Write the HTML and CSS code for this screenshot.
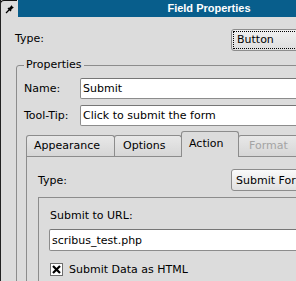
FILE: index.html
```html
<!DOCTYPE html>
<html lang="en">
<head>
    <meta charset="UTF-8">
    <meta name="viewport" content="width=device-width, initial-scale=1.0">
    <title>Field Properties</title>
    <link rel="stylesheet" href="styles.css">
</head>
<body>
    <div class="window">
        <div class="titlebar">
            <div class="corner">
                <svg width="10" height="10" viewBox="0 0 10 10">
                    <path d="M1 9 L4.5 5.5" stroke="#000" stroke-width="1.3"/>
                    <path d="M2.5 4.5 L5.5 7.5 L6.5 6.5 L6 6 L8 4 L9 4 L6 1 L6 2 L4 4 L3.5 3.5 Z" fill="#000"/>
                </svg>
            </div>
            <div class="title">Field Properties</div>
        </div>

        <div class="content">
            <div class="row type-row">
                <label class="type-label">Type:</label>
                <div class="combo"><span class="focus">Button</span></div>
            </div>

            <fieldset class="props">
                <legend>Properties</legend>
                <div class="row field">
                    <label for="name">Name:</label>
                    <input type="text" id="name" value="Submit">
                </div>
                <div class="row field">
                    <label for="tooltip">Tool-Tip:</label>
                    <input type="text" id="tooltip" value="Click to submit the form">
                </div>

                <div class="tabs">
                    <div class="tabbar">
                        <div class="tab tab-appearance">Appearance</div>
                        <div class="tab tab-options">Options</div>
                        <div class="tab tab-action active">Action</div>
                        <div class="tab tab-format disabled">Format</div>
                    </div>
                    <div class="pane">
                        <div class="row action-row">
                            <label class="action-label">Type:</label>
                            <button type="button">Submit Form</button>
                        </div>
                        <div class="box">
                            <div class="box-label">Submit to URL:</div>
                            <input type="text" class="url" value="scribus_test.php">
                            <div class="check">
                                <span class="checkbox">
                                    <svg width="9" height="9" viewBox="0 0 9 9">
                                        <path d="M1 1 L8 8 M8 1 L1 8" stroke="#000" stroke-width="2.2"/>
                                    </svg>
                                </span>
                                <span>Submit Data as HTML</span>
                            </div>
                        </div>
                    </div>
                </div>
            </fieldset>
        </div>
    </div>
</body>
</html>
```

FILE: styles.css
```css
html, body {
    margin: 0;
    padding: 0;
    overflow: hidden;
}
body {
    width: 296px;
    height: 281px;
    background-color: #dcdcdc;
    font-family: "DejaVu Sans", sans-serif;
    font-size: 11px;
    color: #000;
}
.window {
    width: 400px;
    height: 281px;
    border-left: 1px solid #222;
    box-sizing: border-box;
    overflow: hidden;
}
.titlebar {
    display: flex;
    height: 17px;
}
.corner {
    width: 17px;
    height: 17px;
    box-sizing: border-box;
    border-top: 1px solid #111;
    border-left: 1px solid #111;
    border-top-left-radius: 4px;
    margin-left: -1px;
    padding: 3px 0 0 4px;
}
.title {
    flex: 1;
    margin-left: 1px;
    background-color: #085e8c;
    color: #fff;
    font-family: "Liberation Sans", Arial, sans-serif;
    font-weight: bold;
    font-size: 11px;
    line-height: 17px;
    text-align: center;
}
.row {
    display: flex;
    align-items: center;
}
.type-row {
    height: 22px;
    margin-top: 12px;
    padding-left: 14px;
}
.type-label {
    width: 216px;
    margin-bottom: 3px;
}
.combo {
    width: 160px;
    height: 22px;
    box-sizing: border-box;
    border: 1px solid #8c8c8c;
    border-radius: 3px;
    background: linear-gradient(#f0f0f0, #dedede);
    padding: 1px;
}
.focus {
    display: block;
    height: 18px;
    line-height: 16px;
    box-sizing: border-box;
    border: 1px dotted #000;
    padding-left: 3px;
}
.props {
    margin: 7px 0 0 15px;
    padding: 0 0 0 7px;
    border: 1px solid #8c8c8c;
    border-radius: 3px;
    height: 260px;
}
.props legend {
    padding: 0 2px;
    line-height: 14px;
}
.field {
    height: 21px;
    margin-top: 6px;
}
.field label {
    width: 56px;
}
.field input {
    width: 280px;
}
input {
    height: 21px;
    box-sizing: border-box;
    margin: 0;
    padding: 0 2px;
    border: 1px solid #8c8c8c;
    border-top-color: #767676;
    border-radius: 2px;
    background: #fff;
    font-family: inherit;
    font-size: 11px;
    color: #000;
    outline: none;
}
.tabs {
    margin: 5px 0 0 2px;
}
.tabbar {
    display: flex;
    align-items: flex-end;
    height: 25px;
}
.tab {
    height: 21px;
    box-sizing: border-box;
    border: 1px solid #8c8c8c;
    border-bottom: none;
    border-radius: 3px 3px 0 0;
    margin-right: -1px;
    padding-left: 7px;
    line-height: 19px;
    background: linear-gradient(#e8e8e8, #d6d6d6);
}
.tab-appearance { width: 89px; }
.tab-options { width: 68px; padding-left: 8px; }
.tab-action { width: 58px; }
.tab-format { width: 70px; padding-left: 10px; }
.tab.active {
    position: relative;
    height: 26px;
    margin-bottom: -1px;
    background: #dcdcdc;
    line-height: 24px;
}
.tab.disabled {
    color: #a4a4a4;
}
.pane {
    border-top: 1px solid #8c8c8c;
    border-left: 1px solid #8c8c8c;
    padding-left: 11px;
    height: 130px;
}
.action-row {
    height: 22px;
    margin-top: 12px;
}
.action-label {
    width: 193px;
}
button {
    width: 100px;
    height: 22px;
    box-sizing: border-box;
    border: 1px solid #8c8c8c;
    border-radius: 3px;
    background: linear-gradient(#fafafa, #e0e0e0);
    font-family: inherit;
    font-size: 11px;
    text-align: left;
    padding: 0 0 0 4px;
    color: #000;
}
.box {
    margin-top: 6px;
    border-top: 1px solid #8c8c8c;
    border-left: 1px solid #8c8c8c;
    padding: 11px 0 0 11px;
    height: 80px;
}
.box-label {
    line-height: 14px;
}
.url {
    display: block;
    width: 280px;
    height: 22px;
    margin: 6px 0 0 -1px;
}
.check {
    display: flex;
    align-items: center;
    height: 13px;
    margin-top: 12px;
}
.checkbox {
    width: 13px;
    height: 13px;
    box-sizing: border-box;
    border: 1px solid #6e6e6e;
    background: #fff;
    padding: 1px;
    margin-right: 6px;
}
.checkbox svg {
    display: block;
}
```
